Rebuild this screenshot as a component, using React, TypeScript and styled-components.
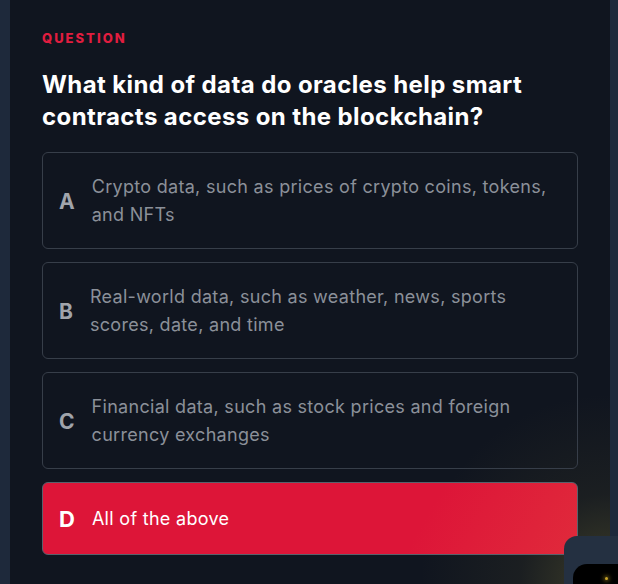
import styled, { createGlobalStyle } from 'styled-components';

const GlobalStyle = createGlobalStyle`
  html, body {
    margin: 0;
    padding: 0;
    background: #10151f;
    font-family: Inter, "Noto Sans", sans-serif;
  }
`;

const OPTIONS = [
  { key: 'A', text: 'Crypto data, such as prices of crypto coins, tokens, and NFTs' },
  { key: 'B', text: 'Real-world data, such as weather, news, sports scores, date, and time' },
  { key: 'C', text: 'Financial data, such as stock prices and foreign currency exchanges' },
  { key: 'D', text: 'All of the above', selected: true },
];

const Shell = styled.div`
  position: relative;
  display: flex;
  width: 618px;
  height: 584px;
  overflow: hidden;
`;

const Rail = styled.div<{ $w: number }>`
  flex: 0 0 ${(p) => p.$w}px;
  background: #1e293b;
`;

const Panel = styled.main`
  flex: 1;
  display: flex;
  flex-direction: column;
  padding: 30px 32px 0;
  background:
    radial-gradient(circle at 100% 100%, rgba(150, 140, 60, 0.35) 0, rgba(90, 85, 45, 0.15) 90px, rgba(16, 21, 31, 0) 190px),
    #10151f;
`;

const Eyebrow = styled.div`
  color: #e11d3f;
  font-size: 13px;
  line-height: 16px;
  font-weight: 800;
  letter-spacing: 2px;
`;

const Question = styled.h1`
  margin: 23px 0 19px;
  color: #ffffff;
  font-size: 24px;
  line-height: 32px;
  font-weight: 700;
  letter-spacing: 0.4px;
`;

const List = styled.div`
  display: flex;
  flex-direction: column;
  gap: 13px;
`;

const Option = styled.div<{ $selected?: boolean }>`
  display: flex;
  align-items: center;
  gap: 17px;
  padding: 20px 16px 19px 16px;
  border: 1px solid ${(p) => (p.$selected ? '#5a616c' : '#373e49')};
  border-radius: 6px;
  background: ${(p) =>
    p.$selected ? 'linear-gradient(120deg, #dd1538 0%, #dd1538 70%, #e02a3b 100%)' : 'transparent'};
`;

const Letter = styled.span<{ $selected?: boolean }>`
  flex: 0 0 auto;
  min-height: 32px;
  display: flex;
  align-items: center;
  font-size: ${(p) => (p.$selected ? 22 : 21)}px;
  font-weight: 700;
  color: ${(p) => (p.$selected ? '#ffffff' : '#a0a4ab')};
`;

const Answer = styled.span<{ $selected?: boolean }>`
  font-size: 18px;
  line-height: 28px;
  letter-spacing: 0.3px;
  color: ${(p) => (p.$selected ? '#ffffff' : '#8b9099')};
`;

const Widget = styled.div`
  position: absolute;
  left: 564px;
  top: 536px;
  width: 80px;
  height: 80px;
  padding: 28px 0 0 9px;
  box-sizing: border-box;
  border-radius: 13px;
  background: #243041;
`;

const WidgetScreen = styled.div`
  position: relative;
  width: 100%;
  height: 100%;
  border-radius: 14px;
  background: #000000;

  &::after {
    content: '';
    position: absolute;
    left: 32px;
    top: 13px;
    width: 3px;
    height: 3px;
    border-radius: 50%;
    background: #c9a52a;
    box-shadow: 0 0 4px 1px rgba(220, 180, 40, 0.6);
  }
`;

export default function App() {
  return (
    <Shell>
      <GlobalStyle />
      <Rail $w={10} />
      <Panel>
        <Eyebrow>QUESTION</Eyebrow>
        <Question>What kind of data do oracles help smart contracts access on the blockchain?</Question>
        <List>
          {OPTIONS.map((o) => (
            <Option key={o.key} $selected={o.selected}>
              <Letter $selected={o.selected}>{o.key}</Letter>
              <Answer $selected={o.selected}>{o.text}</Answer>
            </Option>
          ))}
        </List>
      </Panel>
      <Rail $w={8} />
      <Widget>
        <WidgetScreen />
      </Widget>
    </Shell>
  );
}
